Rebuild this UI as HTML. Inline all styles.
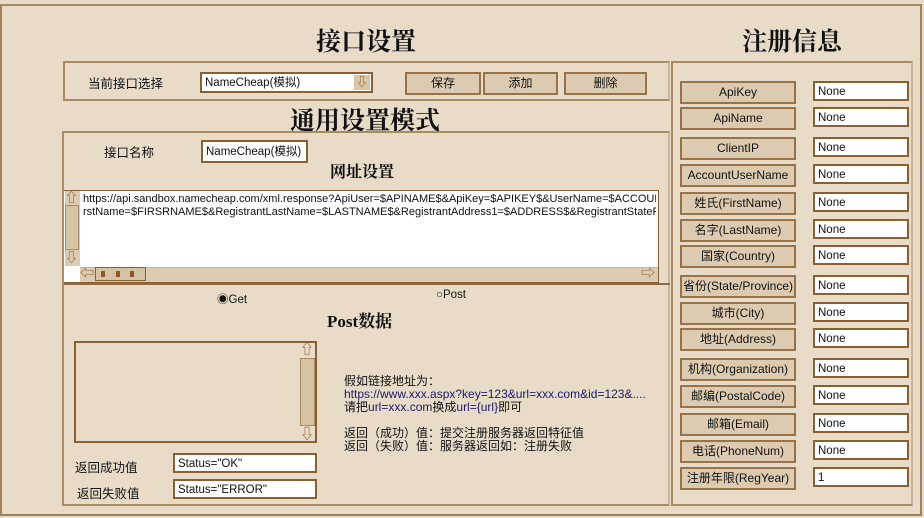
<!DOCTYPE html>
<html><head><meta charset="utf-8"><style>
*{box-sizing:border-box;margin:0;padding:0}
body{width:924px;height:518px;background:#e8dcc9;font-family:"Liberation Sans","Noto Sans CJK SC",sans-serif;font-size:12px;color:#111;position:relative;overflow:hidden}
.a{position:absolute}
.panel{position:absolute;border:2px solid #a98a63;border-right-color:#c9b495;border-bottom-color:#a98a63}
.t{position:absolute;font-family:"Liberation Serif","Noto Serif CJK SC",serif;font-weight:bold;color:#111;white-space:nowrap}
.inp{position:absolute;background:#fff;border:2px solid #8b6030;height:20px;padding:2px 3px 0;font-size:11.5px;line-height:14px;white-space:nowrap;overflow:hidden}
.btn{position:absolute;background:#dccbb0;border:2px solid #9a7248;text-align:center;font-size:12px;line-height:19px;height:23px;white-space:nowrap}
.lbl{position:absolute;white-space:nowrap;font-size:12.5px}
.url{color:#1a1a6a}
</style></head><body>
<div class="a" style="left:0;top:4px;width:922px;height:512px;border:2px solid #a0805a;border-top-color:#a98a63"></div>

<div class="t" style="left:316px;top:22px;font-size:25px">接口设置</div>
<div class="t" style="left:742px;top:22px;font-size:25px">注册信息</div>

<div class="panel" style="left:63px;top:61px;width:607px;height:40px"></div>
<div class="lbl" style="left:88px;top:73px">当前接口选择</div>
<div class="inp" style="left:200px;top:72px;width:173px;height:21px;line-height:15px">NameCheap(模拟)<span class="a" style="right:1px;top:1px;width:16px;height:15px;background:#d8c6a8;color:#8b5a2b;font-size:12px;line-height:15px;text-align:center">⇩</span></div>
<div class="btn" style="left:405px;top:72px;width:76px">保存</div>
<div class="btn" style="left:483px;top:72px;width:75px">添加</div>
<div class="btn" style="left:564px;top:72px;width:83px">删除</div>

<div class="t" style="left:290px;top:101px;font-size:25px">通用设置模式</div>
<div class="panel" style="left:62px;top:131px;width:608px;height:375px"></div>
<div class="lbl" style="left:104px;top:142px">接口名称</div>
<div class="inp" style="left:201px;top:140px;width:107px;height:23px;line-height:17px">NameCheap(模拟)</div>
<div class="t" style="left:330px;top:159px;font-size:16px">网址设置</div>

<div class="a" style="left:64px;top:190px;width:595px;height:93px;background:#fff;border:1px solid #8b6030;border-left:none"></div>
<div class="a" style="left:65px;top:191px;width:15px;height:75px;background:#dccbb0"></div>
<div class="a" style="left:65px;top:192px;color:#8b5a2b;font-size:13px;line-height:12px">⇧</div>
<div class="a" style="left:65px;top:205px;width:14px;height:45px;background:#d6c3a3;border:1px solid #a98a63"></div>
<div class="a" style="left:65px;top:252px;color:#8b5a2b;font-size:13px;line-height:12px">⇩</div>
<div class="a" style="left:83px;top:193px;font-size:11px;line-height:13px;white-space:nowrap;width:573px;overflow:hidden">https://api.sandbox.namecheap.com/xml.response?ApiUser=$APINAME$&amp;ApiKey=$APIKEY$&amp;UserName=$ACCOUNTUSERNAME$<br>rstName=$FIRSRNAME$&amp;RegistrantLastName=$LASTNAME$&amp;RegistrantAddress1=$ADDRESS$&amp;RegistrantStateProvince</div>
<div class="a" style="left:80px;top:267px;width:578px;height:15px;background:#dccbb0;border-top:1px solid #c9b495"></div>
<div class="a" style="left:80px;top:266px;color:#8b5a2b;font-size:14px;line-height:15px">⇦</div>
<div class="a" style="left:95px;top:267px;width:51px;height:14px;background:#d6c3a3;border:1px solid #8b6030"></div>
<div class="a" style="left:101px;top:271px;width:4px;height:6px;background:#8b5a2b"></div>
<div class="a" style="left:116px;top:271px;width:4px;height:6px;background:#8b5a2b"></div>
<div class="a" style="left:130px;top:271px;width:4px;height:6px;background:#8b5a2b"></div>
<div class="a" style="left:641px;top:266px;color:#8b5a2b;font-size:14px;line-height:15px">⇨</div>
<div class="a" style="left:64px;top:283px;width:606px;height:2px;background:#8b6a45"></div>

<div class="lbl" style="left:217px;top:291px;font-size:11.5px">◉Get</div>
<div class="lbl" style="left:436px;top:289px;font-size:11.5px">○Post</div>
<div class="t" style="left:327px;top:307px;font-size:17px">Post数据</div>

<div class="a" style="left:74px;top:341px;width:243px;height:102px;border:2px solid #8b6030;background:#e8dcc9"></div>
<div class="a" style="left:300px;top:343px;width:15px;height:98px;background:#e8dcc9"></div>
<div class="a" style="left:300px;top:342px;color:#8b5a2b;font-size:14px;line-height:14px">⇧</div>
<div class="a" style="left:300px;top:358px;width:15px;height:68px;background:#d6c3a3;border:1px solid #a98a63"></div>
<div class="a" style="left:300px;top:427px;color:#8b5a2b;font-size:14px;line-height:14px">⇩</div>

<div class="lbl" style="left:75px;top:457px">返回成功值</div>
<div class="inp" style="left:173px;top:453px;width:144px">Status="OK"</div>
<div class="lbl" style="left:77px;top:483px">返回失败值</div>
<div class="inp" style="left:173px;top:479px;width:144px">Status="ERROR"</div>

<div class="a" style="left:344px;top:375px;font-size:12px;line-height:13px;white-space:nowrap">假如链接地址为：<br><span class="url">https://www.xxx.aspx?key=123&amp;url=xxx.com&amp;id=123&amp;....</span><br>请把<span class="url">url=xxx.com</span>换成<span class="url">url={url}</span>即可<br><br>返回（成功）值：提交注册服务器返回特征值<br>返回（失败）值：服务器返回如：注册失败</div>

<div class="panel" style="left:671px;top:61px;width:242px;height:445px"></div>

<div class="btn" style="left:680px;top:81px;width:116px">ApiKey</div><div class="inp" style="left:813px;top:81px;width:96px">None</div>
<div class="btn" style="left:680px;top:107px;width:116px">ApiName</div><div class="inp" style="left:813px;top:107px;width:96px">None</div>
<div class="btn" style="left:680px;top:137px;width:116px">ClientIP</div><div class="inp" style="left:813px;top:137px;width:96px">None</div>
<div class="btn" style="left:680px;top:164px;width:116px">AccountUserName</div><div class="inp" style="left:813px;top:164px;width:96px">None</div>
<div class="btn" style="left:680px;top:192px;width:116px">姓氏(FirstName)</div><div class="inp" style="left:813px;top:192px;width:96px">None</div>
<div class="btn" style="left:680px;top:219px;width:116px">名字(LastName)</div><div class="inp" style="left:813px;top:219px;width:96px">None</div>
<div class="btn" style="left:680px;top:245px;width:116px">国家(Country)</div><div class="inp" style="left:813px;top:245px;width:96px">None</div>
<div class="btn" style="left:680px;top:275px;width:116px">省份(State/Province)</div><div class="inp" style="left:813px;top:275px;width:96px">None</div>
<div class="btn" style="left:680px;top:302px;width:116px">城市(City)</div><div class="inp" style="left:813px;top:302px;width:96px">None</div>
<div class="btn" style="left:680px;top:328px;width:116px">地址(Address)</div><div class="inp" style="left:813px;top:328px;width:96px">None</div>
<div class="btn" style="left:680px;top:358px;width:116px">机构(Organization)</div><div class="inp" style="left:813px;top:358px;width:96px">None</div>
<div class="btn" style="left:680px;top:385px;width:116px">邮编(PostalCode)</div><div class="inp" style="left:813px;top:385px;width:96px">None</div>
<div class="btn" style="left:680px;top:413px;width:116px">邮箱(Email)</div><div class="inp" style="left:813px;top:413px;width:96px">None</div>
<div class="btn" style="left:680px;top:440px;width:116px">电话(PhoneNum)</div><div class="inp" style="left:813px;top:440px;width:96px">None</div>
<div class="btn" style="left:680px;top:467px;width:116px">注册年限(RegYear)</div><div class="inp" style="left:813px;top:467px;width:96px">1</div>
</body></html>
